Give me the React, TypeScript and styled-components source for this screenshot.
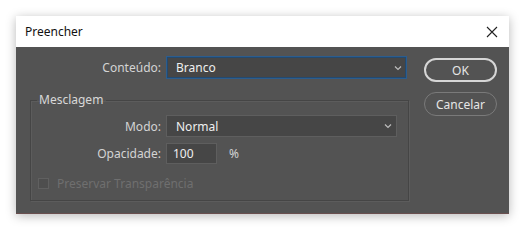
import React from "react";
import styled, { createGlobalStyle } from "styled-components";

const Global = createGlobalStyle`
  html, body {
    margin: 0;
    padding: 0;
    background: #ffffff;
  }
  * {
    box-sizing: border-box;
  }
`;

const Page = styled.div`
  width: 524px;
  height: 230px;
  padding: 16px 0 0 16px;
  background: #ffffff;
  font-family: "Noto Sans", "Open Sans", sans-serif;
`;

const Dialog = styled.div`
  width: 493px;
  height: 198px;
  display: flex;
  flex-direction: column;
  box-shadow: 0 2px 10px rgba(0, 0, 0, 0.28);
`;

const TitleBar = styled.div`
  height: 31px;
  display: flex;
  align-items: center;
  justify-content: space-between;
  padding: 0 10px 0 9px;
  background: #ffffff;
  color: #111111;
  font-size: 12px;
`;

const CloseButton = styled.div`
  width: 14px;
  height: 14px;
  display: flex;
  align-items: center;
  justify-content: center;
`;

const Body = styled.div`
  flex: 1;
  display: flex;
  gap: 15px;
  padding: 9px 0 0 14px;
  background: #535353;
  border-bottom: 1px solid #6a4f4f;
`;

const LeftColumn = styled.div`
  width: 379px;
  display: flex;
  flex-direction: column;
`;

const Row = styled.div<{ $label: number; $mt?: number }>`
  display: grid;
  grid-template-columns: ${(p) => p.$label}px auto auto;
  justify-content: start;
  column-gap: 5px;
  align-items: center;
  margin-top: ${(p) => p.$mt ?? 0}px;
`;

const Label = styled.div`
  text-align: right;
  color: #d4d4d4;
  font-size: 12px;
`;

const Select = styled.div<{ $width: number; $focus?: boolean }>`
  width: ${(p) => p.$width}px;
  height: ${(p) => (p.$focus ? 23 : 22)}px;
  display: flex;
  align-items: center;
  justify-content: space-between;
  padding: 0 4px 0 9px;
  background: #464646;
  border: 1px solid ${(p) => (p.$focus ? "#2b5d8f" : "#5e5e5e")};
  box-shadow: ${(p) => (p.$focus ? "inset 0 0 0 1px #24496d" : "none")};
  color: #efefef;
  font-size: 12px;
`;

const NumberInput = styled.div`
  width: 51px;
  height: 21px;
  display: flex;
  align-items: center;
  padding-left: 6px;
  background: #464646;
  border: 1px solid #5e5e5e;
  color: #efefef;
  font-size: 12px;
`;

const Unit = styled.div`
  padding-left: 7px;
  color: #d4d4d4;
  font-size: 12px;
`;

const Group = styled.fieldset`
  margin: 13px 0 0 0;
  padding: 5px 0 0 0;
  height: 109px;
  border: 1px solid #454545;
  box-shadow: 1px 1px 0 #5c5c5c, inset 1px 1px 0 #5c5c5c;
  min-width: 0;
`;

const Legend = styled.legend`
  margin-left: 6px;
  padding: 0 3px 0 2px;
  color: #d8d8d8;
  font-size: 12px;
  line-height: 16px;
`;

const CheckRow = styled.div`
  display: flex;
  align-items: center;
  gap: 8px;
  margin: 11px 0 0 7px;
  color: #6f6f6f;
  font-size: 12px;
`;

const CheckBox = styled.div`
  width: 11px;
  height: 11px;
  border: 1px solid #606060;
  background: #4e4e4e;
`;

const RightColumn = styled.div`
  display: flex;
  flex-direction: column;
  gap: 10px;
  padding-top: 2px;
`;

const Button = styled.div<{ $primary?: boolean }>`
  width: 73px;
  height: 24px;
  display: flex;
  align-items: center;
  justify-content: center;
  border-radius: 12px;
  border: ${(p) => (p.$primary ? "2px solid #d6d6d6" : "1px solid #7a7a7a")};
  color: #e6e6e6;
  font-size: 12px;
`;

const Chevron = () => (
  <svg width="8" height="6" viewBox="0 0 8 6">
    <path d="M1 1.5 L4 4.5 L7 1.5" fill="none" stroke="#bdbdbd" strokeWidth="1.2" />
  </svg>
);

const App: React.FC = () => {
  return (
    <Page>
      <Global />
      <Dialog>
        <TitleBar>
          <span>Preencher</span>
          <CloseButton>
            <svg width="12" height="12" viewBox="0 0 12 12">
              <path d="M1 1 L11 11 M11 1 L1 11" stroke="#222" strokeWidth="1.1" />
            </svg>
          </CloseButton>
        </TitleBar>
        <Body>
          <LeftColumn>
            <Row $label={131}>
              <Label>Conteúdo:</Label>
              <Select $width={241} $focus>
                <span>Branco</span>
                <Chevron />
              </Select>
            </Row>
            <Group>
              <Legend>Mesclagem</Legend>
              <Row $label={130} $mt={2}>
                <Label>Modo:</Label>
                <Select $width={231}>
                  <span>Normal</span>
                  <Chevron />
                </Select>
              </Row>
              <Row $label={130} $mt={6}>
                <Label>Opacidade:</Label>
                <NumberInput>100</NumberInput>
                <Unit>%</Unit>
              </Row>
              <CheckRow>
                <CheckBox />
                <span>Preservar Transparência</span>
              </CheckRow>
            </Group>
          </LeftColumn>
          <RightColumn>
            <Button $primary>OK</Button>
            <Button>Cancelar</Button>
          </RightColumn>
        </Body>
      </Dialog>
    </Page>
  );
};

export default App;
